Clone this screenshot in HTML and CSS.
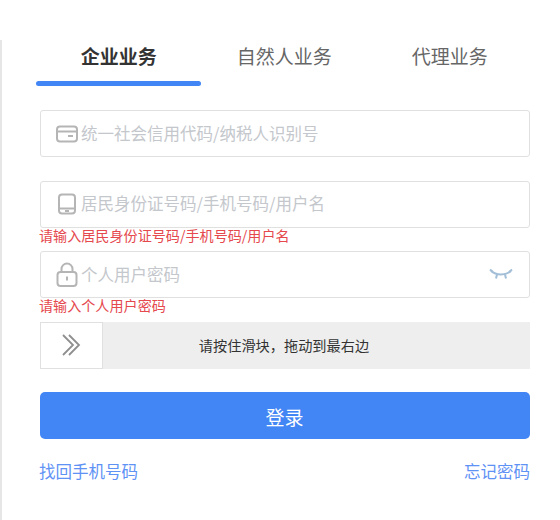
FILE: index.html
```html
<!DOCTYPE html>
<html lang="zh-CN">
<head>
    <meta charset="UTF-8">
    <title>登录</title>
    <link rel="stylesheet" href="styles.css">
</head>
<body>

<div class="panel">
    <div class="tabs">
        <div class="tab active">企业业务<span class="tabLine"></span></div>
        <div class="tab">自然人业务</div>
        <div class="tab">代理业务</div>
    </div>

    <div class="form">
        <div class="row">
            <div class="field">
                <svg class="icon" width="22" height="18" viewBox="0 0 22 18" fill="none" stroke="#b5b5b5" stroke-width="2">
                    <rect x="1" y="1.5" width="20" height="15" rx="3"/>
                    <path d="M2 6.5h18"/>
                    <path d="M12 11h5"/>
                </svg>
                <span class="holder">统一社会信用代码/纳税人识别号</span>
            </div>
        </div>
        <div class="row">
            <div class="field">
                <svg class="icon" width="22" height="22" viewBox="0 0 22 22" fill="none" stroke="#b5b5b5" stroke-width="2">
                    <rect x="3" y="1.5" width="16" height="19" rx="3"/>
                    <path d="M3 15.5h16"/>
                    <path d="M9 18h4"/>
                </svg>
                <span class="holder">居民身份证号码/手机号码/用户名</span>
            </div>
            <div class="error">请输入居民身份证号码/手机号码/用户名</div>
        </div>
        <div class="row">
            <div class="field">
                <svg class="icon" width="22" height="25" viewBox="0 0 22 25" fill="none" stroke="#b5b5b5" stroke-width="2">
                    <rect x="1.5" y="10" width="19" height="14" rx="3"/>
                    <path d="M5.5 10V7a5.500 5.500 0 0 1 11 0v3"/>
                    <path d="M11 14.500v4"/>
                </svg>
                <span class="holder">个人用户密码</span>
                <svg class="eye" width="24" height="13" viewBox="0 0 24 13" fill="none" stroke="#a3bfd8" stroke-width="2">
                    <path d="M2 3c5 4.500 15 4.500 20 0"/>
                    <path d="M1 1.500l3 2.500M23 1.500l-3 2.500M8 6.500l-1 4M16 6.500l1 4"/>
                </svg>
            </div>
            <div class="error">请输入个人用户密码</div>
        </div>
        <div class="row">
            <div class="slider">
                <div class="thumb">
                    <svg class="arrows" width="20" height="22" viewBox="0 0 20 22" fill="none" stroke="#8f8f8f" stroke-width="1.800">
                        <path d="M2 1l10 10L2 21"/>
                        <path d="M8 1l10 10L8 21"/>
                    </svg>
                </div>
                <div class="sliderText">请按住滑块，拖动到最右边</div>
            </div>
        </div>
        <div class="loginBtn">登录</div>
        <div class="links">
            <span class="findLink">找回手机号码</span>
            <span>忘记密码</span>
        </div>
    </div>
</div>

</body>
</html>
```

FILE: styles.css
```css
* {
    padding: 0;
    margin: 0;
    box-sizing: border-box;
}
body {
    background: #fff;
    font-family: "Noto Sans CJK SC", "Liberation Sans", sans-serif;
}
.panel {
    width: 540px;
    height: 480px;
    margin-top: 40px;
    border-left: 2px solid #e6e6e6;
}
.tabs {
    display: flex;
    padding-left: 34px;
}
.tab {
    width: 165.5px;
    height: 46px;
    padding-top: 2px;
    line-height: 28px;
    font-size: 19px;
    color: #666;
    text-align: center;
}
.tab.active {
    color: #333;
    font-weight: 700;
}
.tabLine {
    display: block;
    height: 5px;
    margin: 11px 1px 0 0;
    background: #4285f4;
    border-radius: 3px;
}
.form {
    width: 490px;
    margin: 24px 0 0 38px;
}
.row {
    height: 70.5px;
}
.field {
    display: flex;
    align-items: center;
    height: 47px;
    padding: 0 16px 0 15px;
    border: 1px solid #e0e0e0;
    border-radius: 3px;
}
.icon {
    flex: none;
    margin-right: 3px;
}
.holder {
    padding-bottom: 2px;
    font-size: 16.5px;
    color: #c4c7cc;
}
.eye {
    margin-left: auto;
}
.error {
    height: 23px;
    margin-left: -1px;
    line-height: 15px;
    font-size: 14.1px;
    color: #e5484d;
}
.slider {
    position: relative;
    height: 47px;
    background: #eee;
}
.thumb {
    position: absolute;
    top: 0;
    left: 0;
    display: flex;
    align-items: center;
    justify-content: center;
    width: 63px;
    height: 47px;
    background: #fff;
    border: 1px solid #e0e0e0;
}
.arrows {
    margin-right: 2px;
}
.sliderText {
    padding-right: 2px;
    line-height: 47px;
    font-size: 14.2px;
    color: #333;
    text-align: center;
}
.loginBtn {
    height: 47px;
    padding: 1px 1px 0 0;
    line-height: 47px;
    font-size: 19px;
    color: #fff;
    text-align: center;
    background: #4285f4;
    border-radius: 5px;
}
.links {
    display: flex;
    justify-content: space-between;
    margin-top: 21px;
    line-height: 22px;
    font-size: 16.5px;
    color: #5f92f5;
}
.findLink {
    margin-left: -1px;
}
```
